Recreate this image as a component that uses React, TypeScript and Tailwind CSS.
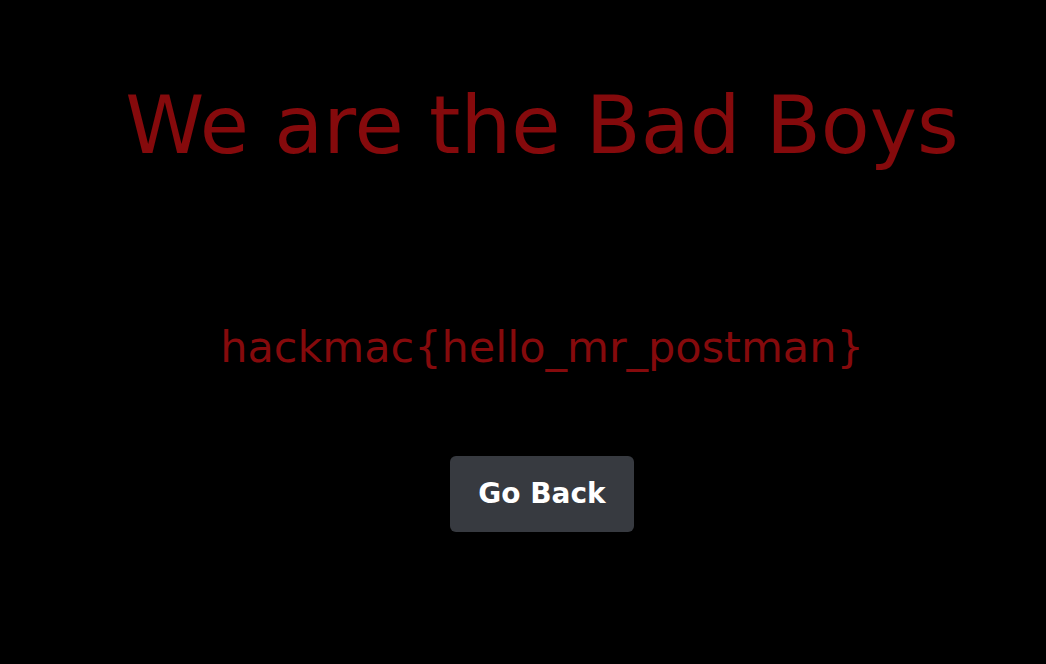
export default function App() {
  return (
    <div className="min-h-[664px] bg-black pl-[38px] font-['DejaVu_Sans',sans-serif]">
      <div className="flex flex-col items-center pt-[82px]">
        <h1 className="text-[80px] leading-[88px] font-normal text-[#850a0c]">We are the Bad Boys</h1>
        <p className="mt-[151px] text-[43px] leading-[52px] text-[#850a0c]">hackmac&#123;hello_mr_postman&#125;</p>
        <button className="mt-[83px] h-[76px] w-[184px] rounded-md bg-[#373a40] text-[28px] font-bold text-white">
          Go Back
        </button>
      </div>
    </div>
  );
}
